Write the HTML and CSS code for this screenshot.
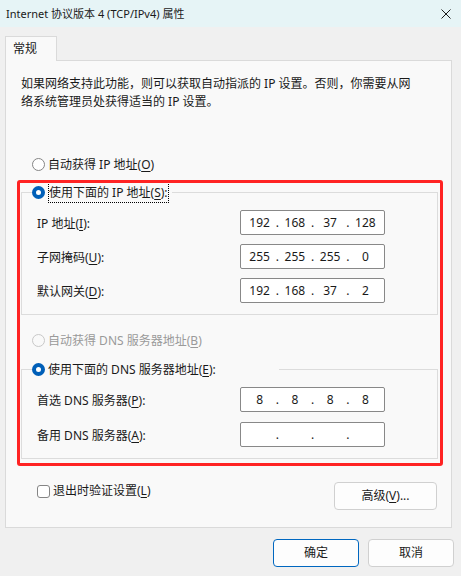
FILE: index.html
```html
<!DOCTYPE html>
<html lang="zh-CN">
<head>
  <meta charset="UTF-8" />
  <title>Internet 协议版本 4 (TCP/IPv4) 属性</title>
  <link rel="stylesheet" href="styles.css">
</head>
<body>
  <div class="titlebar">
    <span class="title">Internet 协议版本 4 (TCP/IPv4) 属性</span>
    <svg class="close" width="10" height="10" viewBox="0 0 10 10">
      <path d="M0.5 0.5 L9.5 9.5 M9.5 0.5 L0.5 9.5" stroke="#1b1b1b" stroke-width="1" fill="none" />
    </svg>
  </div>

  <div class="tabs">
    <div class="tab">常规</div>
  </div>

  <div class="panel">
    <p class="intro">如果网络支持此功能，则可以获取自动指派的 IP 设置。否则，你需要从网络系统管理员处获得适当的 IP 设置。</p>

    <div class="option first">
      <span class="radio"></span>
      <span>自动获得 IP 地址(<u>O</u>)</span>
    </div>

    <fieldset class="group">
      <legend class="option legend-ip">
        <span class="radio checked"></span>
        <span class="focus">使用下面的 IP 地址(<u>S</u>):</span>
      </legend>
      <div class="fields">
        <div class="field">
          <span class="label">IP 地址(<u>I</u>):</span>
          <div class="ip"><span>192</span><i>.</i><span>168</span><i>.</i><span>37</span><i>.</i><span>128</span></div>
        </div>
        <div class="field">
          <span class="label">子网掩码(<u>U</u>):</span>
          <div class="ip"><span>255</span><i>.</i><span>255</span><i>.</i><span>255</span><i>.</i><span>0</span></div>
        </div>
        <div class="field">
          <span class="label">默认网关(<u>D</u>):</span>
          <div class="ip"><span>192</span><i>.</i><span>168</span><i>.</i><span>37</span><i>.</i><span>2</span></div>
        </div>
      </div>
    </fieldset>

    <div class="option disabled">
      <span class="radio"></span>
      <span>自动获得 DNS 服务器地址(<u>B</u>)</span>
    </div>

    <fieldset class="group dns">
      <legend class="option legend-dns">
        <span class="radio checked"></span>
        <span>使用下面的 DNS 服务器地址(<u>E</u>):</span>
      </legend>
      <div class="fields">
        <div class="field">
          <span class="label">首选 DNS 服务器(<u>P</u>):</span>
          <div class="ip"><span>8</span><i>.</i><span>8</span><i>.</i><span>8</span><i>.</i><span>8</span></div>
        </div>
        <div class="field">
          <span class="label">备用 DNS 服务器(<u>A</u>):</span>
          <div class="ip"><span></span><i>.</i><span></span><i>.</i><span></span><i>.</i><span></span></div>
        </div>
      </div>
    </fieldset>

    <div class="bottom-row">
      <div class="check">
        <span class="checkbox"></span>
        <span>退出时验证设置(<u>L</u>)</span>
      </div>
      <button class="btn advanced">高级(<u>V</u>)...</button>
    </div>

    <!-- red annotation frame -->
    <div class="highlight"></div>
  </div>

  <div class="footer">
    <button class="btn primary">确定</button>
    <button class="btn">取消</button>
  </div>
</body>
</html>
```

FILE: styles.css
```css
* {
  box-sizing: border-box;
}
body {
  margin: 0;
  width: 461px;
  height: 576px;
  background: #f0f0f0;
  font-family: "Segoe UI", "Noto Sans", "Noto Sans CJK SC", sans-serif;
  font-size: 12px;
  color: #1a1a1a;
  overflow: hidden;
}
u {
  text-decoration: underline;
  text-underline-offset: 2px;
}

/* title bar */
.titlebar {
  height: 27px;
  background: #e6f4f6;
  display: flex;
  align-items: center;
  justify-content: space-between;
  padding: 0 10px 0 6px;
  line-height: 18px;
}
.title {
  font-size: 11px;
}
.close {
  display: block;
}

/* tab strip */
.tabs {
  padding: 9px 0 0 5px;
  display: flex;
}
.tab {
  position: relative;
  z-index: 1;
  width: 52px;
  height: 25px;
  margin-bottom: -1px;
  padding: 3px 0 0 7px;
  line-height: 18px;
  background: #f9f9f9;
  border: 1px solid #dadada;
  border-bottom: none;
}

/* main panel */
.panel {
  position: relative;
  margin: 0 9px 0 5px;
  height: 468px;
  padding: 14px 13px 0 15px;
  background: #f9f9f9;
  border: 1px solid #dadada;
}
.intro {
  margin: 0;
  line-height: 18px;
  width: 395px;
}

.option {
  display: flex;
  align-items: center;
  height: 21px;
  line-height: 21px;
  padding-left: 11px;
}
.option.first {
  margin-top: 43px;
}
.option.disabled {
  margin-top: 15px;
  color: #9a9a9a;
}
.radio {
  width: 13px;
  height: 13px;
  border-radius: 50%;
  border: 1px solid #858585;
  background: #fff;
  margin-right: 3px;
  flex-shrink: 0;
}
.disabled .radio {
  border-color: #c8c8c8;
  background: #f9f9f9;
}
.radio.checked {
  border: 4px solid #005fb8;
  background: #fff;
}
.focus {
  outline: 1px dotted #000;
  outline-offset: -1px;
  padding: 0 1px;
  height: 21px;
}

/* group boxes */
.group {
  margin: 7px 0 0;
  width: 417px;
  padding: 7px 0 11px 0;
  border: 1px solid #dcdcdc;
}
.group.dns {
  margin-top: 8px;
}
.group legend {
  margin-left: 10px;
  padding: 0;
}
.legend-ip {
  width: 140px;
}
.legend-dns {
  width: 247px;
}
.fields {
  display: flex;
  flex-direction: column;
  gap: 9px;
  padding-left: 15px;
}
.dns .fields {
  gap: 10px;
}
.field {
  display: flex;
  align-items: center;
  height: 25px;
}
.label {
  width: 203px;
}
.ip {
  width: 145px;
  height: 25px;
  border: 1px solid #888;
  border-radius: 2px;
  background: #fff;
  display: grid;
  grid-template-columns: 1fr 4px 1fr 4px 1fr 4px 1fr;
  align-items: center;
  padding: 0 3px 0 3px;
  line-height: 22px;
  font-family: "Noto Sans", sans-serif;
}
.ip span {
  text-align: center;
}
.ip i {
  font-style: normal;
  text-align: center;
}

/* checkbox + advanced */
.bottom-row {
  margin-top: 23px;
  width: 417px;
  display: flex;
  align-items: flex-start;
  justify-content: space-between;
  padding-left: 16px;
}
.check {
  display: flex;
  align-items: center;
  line-height: 18px;
}
.checkbox {
  width: 13px;
  height: 13px;
  border: 1px solid #858585;
  border-radius: 3px;
  background: #fff;
  margin-right: 3px;
}
.btn {
  font: inherit;
  color: #1a1a1a;
  height: 28px;
  width: 86px;
  background: #fdfdfd;
  border: 1px solid #d0d0d0;
  border-radius: 4px;
  padding: 0;
  line-height: 26px;
}
.btn.advanced {
  width: 103px;
  margin-right: 1px;
}
.btn.primary {
  border-color: #0067c0;
}

.footer {
  display: flex;
  justify-content: flex-end;
  gap: 9px;
  padding: 11px 7px 0 0;
}

.highlight {
  position: absolute;
  top: 119px;
  left: 11px;
  width: 426px;
  height: 286px;
  border: 3px solid #ff2323;
  border-radius: 3px;
  pointer-events: none;
}
```
